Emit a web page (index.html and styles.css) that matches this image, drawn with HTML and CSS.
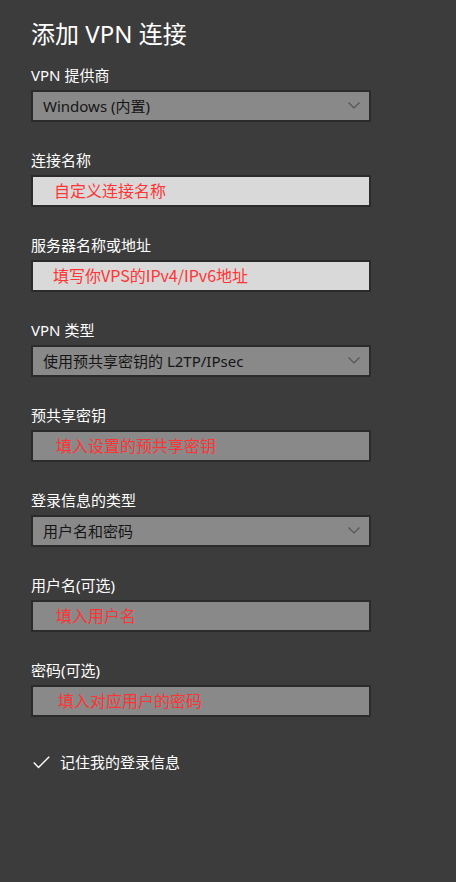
FILE: index.html
```html
<!DOCTYPE html>
<html lang="zh-CN">
<head>
<meta charset="utf-8">
<title>添加 VPN 连接</title>
<link rel="stylesheet" href="styles.css">
</head>
<body>
<div class="page">
  <h1 class="title">添加 VPN 连接</h1>

  <div class="field">
    <div class="label">VPN 提供商</div>
    <div class="box select">
      <span class="value">Windows (内置)</span>
      <svg class="chev" width="12" height="7" viewBox="0 0 12 7"><path d="M0.5 0.5 L6 6 L11.5 0.5" fill="none" stroke="#555" stroke-width="1.2"/></svg>
    </div>
  </div>

  <div class="field">
    <div class="label">连接名称</div>
    <div class="box light"><span class="hint p54">自定义连接名称</span></div>
  </div>

  <div class="field">
    <div class="label">服务器名称或地址</div>
    <div class="box light"><span class="hint p53">填写你VPS的IPv4/IPv6地址</span></div>
  </div>

  <div class="field">
    <div class="label">VPN 类型</div>
    <div class="box select">
      <span class="value">使用预共享密钥的 L2TP/IPsec</span>
      <svg class="chev" width="12" height="7" viewBox="0 0 12 7"><path d="M0.5 0.5 L6 6 L11.5 0.5" fill="none" stroke="#555" stroke-width="1.2"/></svg>
    </div>
  </div>

  <div class="field">
    <div class="label">预共享密钥</div>
    <div class="box"><span class="hint p56">填入设置的预共享密钥</span></div>
  </div>

  <div class="field">
    <div class="label">登录信息的类型</div>
    <div class="box select">
      <span class="value">用户名和密码</span>
      <svg class="chev" width="12" height="7" viewBox="0 0 12 7"><path d="M0.5 0.5 L6 6 L11.5 0.5" fill="none" stroke="#555" stroke-width="1.2"/></svg>
    </div>
  </div>

  <div class="field">
    <div class="label">用户名(可选)</div>
    <div class="box"><span class="hint p56">填入用户名</span></div>
  </div>

  <div class="field">
    <div class="label">密码(可选)</div>
    <div class="box"><span class="hint p58">填入对应用户的密码</span></div>
  </div>

  <div class="check">
    <svg class="tick" width="17" height="13" viewBox="0 0 17 13"><path d="M0.8 6.5 L5.5 11.5 L16.2 0.8" fill="none" stroke="#fff" stroke-width="1.4"/></svg>
    <span>记住我的登录信息</span>
  </div>
</div>
</body>
</html>
```

FILE: styles.css
```css
html, body {
  margin: 0;
  padding: 0;
  background: #3c3c3c;
  height: 100%;
}
body {
  font-family: "Noto Sans", "Noto Sans CJK SC", sans-serif;
  color: #ffffff;
}
.page {
  padding: 18px 0 0 31px;
}
.title {
  margin: 0;
  font-size: 24px;
  line-height: 32px;
  font-weight: 400;
}
.field {
  display: flex;
  flex-direction: column;
  gap: 5px;
  margin-top: 28px;
  width: 340px;
}
.title + .field {
  margin-top: 15px;
}
.label {
  font-size: 15px;
  line-height: 20px;
}
.box {
  box-sizing: border-box;
  height: 32px;
  border: 2px solid #2b2b2b;
  background: #898989;
  display: flex;
  align-items: center;
  padding-bottom: 2px;
}
.box.light {
  background: #d9d9d9;
}
.select {
  padding: 0 9px 2px 10px;
  justify-content: space-between;
}
.chev {
  margin-top: 1px;
}
.value {
  font-size: 15px;
  color: #151515;
}
.chev {
  display: block;
}
.hint {
  font-size: 16px;
  color: #ff3434;
  font-family: "Noto Sans CJK SC", sans-serif;
}
.p53 { padding-left: 20px; }
.p54 { padding-left: 21px; }
.p56 { padding-left: 23px; }
.p58 { padding-left: 25px; }
.check {
  margin-top: 35px;
  display: flex;
  align-items: center;
  gap: 10px;
  padding-left: 2px;
  font-size: 15px;
  line-height: 20px;
}
.tick {
  display: block;
}
```
